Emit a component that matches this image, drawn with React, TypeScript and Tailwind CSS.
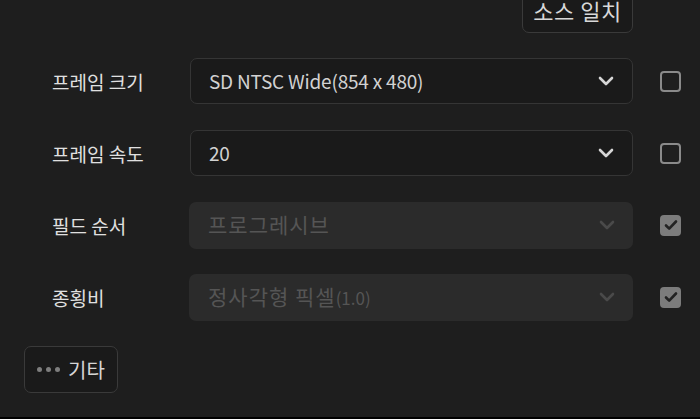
import React from 'react';

const rows = [
  { label: '프레임 크기', value: 'SD NTSC Wide(854 x 480)', enabled: true, checked: false },
  { label: '프레임 속도', value: '20', enabled: true, checked: false },
  { label: '필드 순서', value: '프로그레시브', enabled: false, checked: true },
  { label: '종횡비', value: '정사각형 픽셀', suffix: '(1.0)', enabled: false, checked: true },
];

function Chevron({ dim }: { dim: boolean }) {
  return (
    <svg width="16" height="10" viewBox="0 0 16 10" fill="none">
      <path
        d="M2 2l6 6 6-6"
        stroke={dim ? '#4a4a4a' : '#d6d6d6'}
        strokeWidth="2.6"
        strokeLinecap="round"
        strokeLinejoin="round"
      />
    </svg>
  );
}

function Checkbox({ checked }: { checked: boolean }) {
  if (checked) {
    return (
      <div className="w-[21px] h-[21px] rounded-[4px] bg-[#7c7c7c] flex items-center justify-center">
        <svg width="14" height="12" viewBox="0 0 14 12" fill="none">
          <path d="M2 6.5l3.2 3.2L12 2.5" stroke="#222" strokeWidth="2.6" strokeLinecap="round" strokeLinejoin="round" />
        </svg>
      </div>
    );
  }
  return <div className="w-[21px] h-[21px] rounded-[4px] border-[2.5px] border-[#8a8a8a]" />;
}

export default function App() {
  return (
    <div
      className="w-[700px] h-[419px] bg-[#1e1e1e] overflow-hidden flex flex-col"
      style={{ fontFamily: '"Noto Sans CJK KR", "Noto Sans", sans-serif' }}
    >
      <div className="flex justify-end pr-[67px]">
        <button className="-mt-[13px] h-[46px] w-[111px] rounded-[7px] border border-[#3a3a3a] bg-[#1a1a1a] text-[22px] tracking-[0.5px] text-[#d8d8d8] flex items-center justify-center">
          소스 일치
        </button>
      </div>

      <div className="mt-[25px] flex flex-col gap-[26px] pl-[52px]">
        {rows.map((r) => (
          <div key={r.label} className="flex items-center h-[46px]">
            <div className="w-[138px] text-[19px] text-[#e0e0e0] leading-none">{r.label}</div>
            <div
              className={
                r.enabled
                  ? 'w-[443px] h-[46px] rounded-[7px] border border-[#353535] bg-[#1a1a1a] flex items-center justify-between pl-[18px] pr-[18px]'
                  : 'w-[444px] h-[47px] -ml-[1px] rounded-[7px] bg-[#2b2b2b] flex items-center justify-between pl-[19px] pr-[18px]'
              }
            >
              <span
                className={
                  r.enabled
                    ? 'text-[19px] tracking-[-0.2px] text-[#d2d2d2]'
                    : 'text-[21px] tracking-[1px] text-[#555555]'
                }
              >
                {r.value}
                {r.suffix && <span className="text-[17px] tracking-[0px]">{r.suffix}</span>}
              </span>
              <Chevron dim={!r.enabled} />
            </div>
            <div className="ml-[27px]">
              <Checkbox checked={r.checked} />
            </div>
          </div>
        ))}
      </div>

      <div className="mt-[26px] pl-[24px]">
        <button className="h-[47px] w-[94px] rounded-[7px] border border-[#3a3a3a] bg-[#1a1a1a] flex items-center justify-center gap-[8px]">
          <span className="flex gap-[4px]">
            <span className="w-[5px] h-[5px] rounded-full bg-[#7e7e7e]" />
            <span className="w-[5px] h-[5px] rounded-full bg-[#7e7e7e]" />
            <span className="w-[5px] h-[5px] rounded-full bg-[#7e7e7e]" />
          </span>
          <span className="text-[20px] text-[#d6d6d6]">기타</span>
        </button>
      </div>

      <div className="mt-auto h-[2px] bg-black" />
    </div>
  );
}
